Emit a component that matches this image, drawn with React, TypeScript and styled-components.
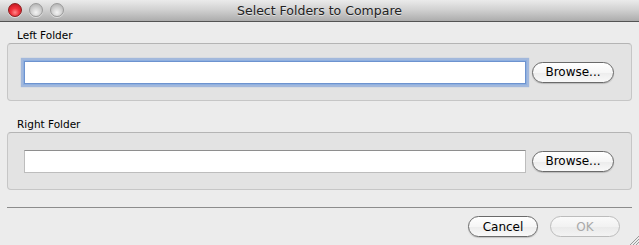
import styled, { createGlobalStyle } from "styled-components";

const GlobalStyle = createGlobalStyle`
  html, body {
    margin: 0;
    padding: 0;
    background: #ececec;
  }
  * {
    box-sizing: border-box;
  }
`;

export default function App() {
  return (
    <>
      <GlobalStyle />
      <Window>
        <TitleBar>
          <Lights>
            <Light $kind="close" />
            <Light $kind="idle" />
            <Light $kind="idle" />
          </Lights>
          <Title>Select Folders to Compare</Title>
          <span />
        </TitleBar>

        <Body>
          <FolderGroup label="Left Folder" focused />
          <FolderGroup label="Right Folder" $second />

          <Separator />

          <ButtonRow>
            <PillButton $width={70}>Cancel</PillButton>
            <PillButton $width={70} disabled>
              OK
            </PillButton>
          </ButtonRow>
        </Body>

        <Grip width="11" height="11" viewBox="0 0 11 11">
          <line x1="2" y1="11" x2="11" y2="2" stroke="#9a9a9a" strokeWidth="1" />
          <line x1="5" y1="11" x2="11" y2="5" stroke="#9a9a9a" strokeWidth="1" />
          <line x1="8" y1="11" x2="11" y2="8" stroke="#9a9a9a" strokeWidth="1" />
        </Grip>
      </Window>
    </>
  );
}

function FolderGroup({
  label,
  focused,
  $second,
}: {
  label: string;
  focused?: boolean;
  $second?: boolean;
}) {
  return (
    <Section $second={$second}>
      <GroupLabel>{label}</GroupLabel>
      <GroupBox>
        <PathInput $focused={focused} />
        <PillButton $width={82}>Browse...</PillButton>
      </GroupBox>
    </Section>
  );
}

// Styled Components
const Window = styled.div`
  position: relative;
  width: 639px;
  height: 245px;
  background: #ececec;
  display: flex;
  flex-direction: column;
  font-family: "DejaVu Sans", "Liberation Sans", sans-serif;
  color: #111;
  overflow: hidden;
`;

const TitleBar = styled.div`
  height: 22px;
  display: grid;
  grid-template-columns: 1fr auto 1fr;
  align-items: center;
  background: linear-gradient(#ebebeb, #d2d2d2 45%, #acacac);
  border-bottom: 1px solid #545454;
`;

const Lights = styled.div`
  display: flex;
  gap: 7px;
  padding-left: 8px;
  padding-bottom: 1px;
`;

const Light = styled.span<{ $kind: "close" | "idle" }>`
  width: 14px;
  height: 14px;
  border-radius: 50%;
  border: 1px solid ${(p) => (p.$kind === "close" ? "#8c1c1c" : "#9a9a9a")};
  background: ${(p) =>
    p.$kind === "close"
      ? "radial-gradient(circle at 50% 70%, #ff8a8a 0%, #f0303a 40%, #b8101a 100%)"
      : "radial-gradient(circle at 50% 70%, #f4f4f4 0%, #d2d2d2 45%, #a8a8a8 100%)"};
  box-shadow: 0 1px 0 rgba(255, 255, 255, 0.5);
`;

const Title = styled.div`
  font-size: 12.5px;
  color: #222;
  white-space: nowrap;
  text-shadow: 0 1px 0 rgba(255, 255, 255, 0.5);
`;

const Body = styled.div`
  display: flex;
  flex-direction: column;
  padding: 0 7px;
`;

const Section = styled.div<{ $second?: boolean }>`
  display: flex;
  flex-direction: column;
  margin-top: ${(p) => (p.$second ? "17px" : "7px")};
`;

const GroupLabel = styled.div`
  font-size: 10.5px;
  line-height: 13px;
  padding-left: 10px;
  margin-bottom: 1px;
  color: #000;
`;

const GroupBox = styled.div`
  height: 58px;
  display: flex;
  align-items: center;
  gap: 6px;
  padding: 0 17px 0 16px;
  background: #e3e3e3;
  border: 1px solid #c6c6c6;
  border-top-color: #b4b4b4;
  border-radius: 4px;
`;

const PathInput = styled.input<{ $focused?: boolean }>`
  flex: 1;
  height: 23px;
  margin: 0;
  background: #fff;
  border: 1px solid #bdbdbd;
  border-top-color: #8e8e8e;
  outline: none;
  ${(p) =>
    p.$focused &&
    `
    border-color: #6d93cf;
    box-shadow: 0 0 0 1px #8fb0e0, 0 0 1px 3px rgba(110, 150, 215, 0.55);
  `}
`;

const PillButton = styled.button<{ $width: number }>`
  width: ${(p) => p.$width}px;
  height: 21px;
  padding: 0;
  flex-shrink: 0;
  font-family: "DejaVu Sans", "Liberation Sans", sans-serif;
  font-size: 12px;
  color: #000;
  background: linear-gradient(#ffffff, #f6f6f6 50%, #ececec 52%, #f9f9f9);
  border: 1px solid #6a6a6a;
  border-radius: 11px;
  box-shadow: 0 1px 1px rgba(0, 0, 0, 0.18);
  cursor: pointer;

  &:disabled {
    color: #a9a9a9;
    border-color: #bcbcbc;
    box-shadow: none;
    background: linear-gradient(#fafafa, #f2f2f2 50%, #eaeaea 52%, #f3f3f3);
    cursor: default;
  }
`;

const Separator = styled.hr`
  margin: 17px 0 0;
  border: none;
  border-top: 1px solid #8c8c8c;
  height: 0;
`;

const ButtonRow = styled.div`
  display: flex;
  justify-content: flex-end;
  gap: 12px;
  margin-top: 8px;
  padding-right: 12px;
`;

const Grip = styled.svg`
  position: absolute;
  right: 0;
  bottom: 0;
`;
